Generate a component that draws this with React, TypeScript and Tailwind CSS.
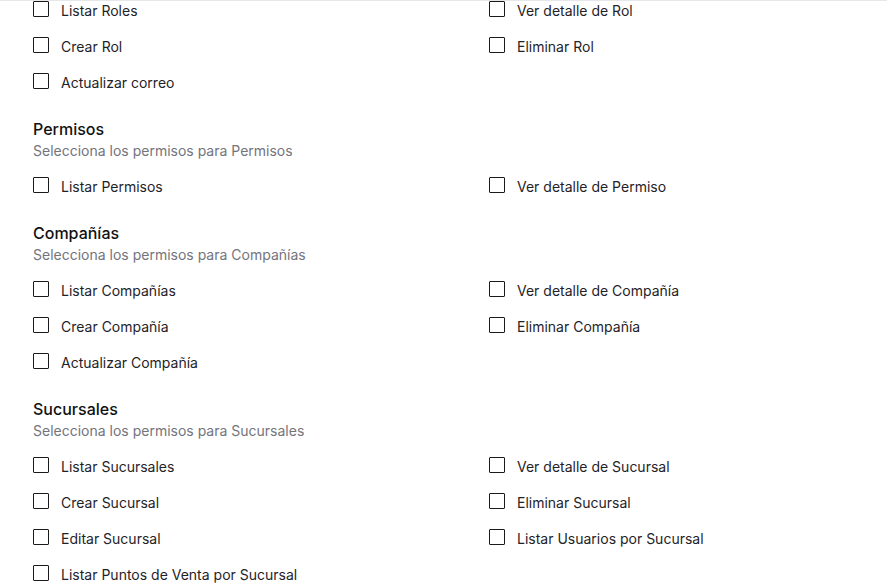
import React from "react";

type Section = {
  title?: string;
  subtitle?: string;
  perms: string[];
};

const sections: Section[] = [
  {
    perms: ["Listar Roles", "Ver detalle de Rol", "Crear Rol", "Eliminar Rol", "Actualizar correo"],
  },
  {
    title: "Permisos",
    subtitle: "Selecciona los permisos para Permisos",
    perms: ["Listar Permisos", "Ver detalle de Permiso"],
  },
  {
    title: "Compañías",
    subtitle: "Selecciona los permisos para Compañías",
    perms: [
      "Listar Compañías",
      "Ver detalle de Compañía",
      "Crear Compañía",
      "Eliminar Compañía",
      "Actualizar Compañía",
    ],
  },
  {
    title: "Sucursales",
    subtitle: "Selecciona los permisos para Sucursales",
    perms: [
      "Listar Sucursales",
      "Ver detalle de Sucursal",
      "Crear Sucursal",
      "Eliminar Sucursal",
      "Editar Sucursal",
      "Listar Usuarios por Sucursal",
      "Listar Puntos de Venta por Sucursal",
    ],
  },
];

function PermCheck({ label }: { label: string }) {
  return (
    <label className="flex items-start gap-3 cursor-pointer">
      <span className="h-4 w-4 shrink-0 rounded-[1px] border border-[#1a1a1a] bg-white" />
      <span className="text-sm leading-5 text-[#1f2328]">{label}</span>
    </label>
  );
}

export default function App() {
  return (
    <div
      className="h-[583px] overflow-hidden border-t border-[#e5e7eb] bg-white px-[33px]"
      style={{ fontFamily: "Inter, 'Noto Sans', sans-serif" }}
    >
      <div className="flex flex-col gap-6">
        {sections.map((s, i) => (
          <section key={i}>
            {s.title && (
              <div className="mb-4">
                <h3 className="text-base font-medium leading-6 text-[#111]">{s.title}</h3>
                <p className="text-sm leading-5 text-[#74747c]">{s.subtitle}</p>
              </div>
            )}
            <div className="grid grid-cols-2 gap-x-[91px] gap-y-4">
              {s.perms.map((p) => (
                <PermCheck key={p} label={p} />
              ))}
            </div>
          </section>
        ))}
      </div>
    </div>
  );
}
